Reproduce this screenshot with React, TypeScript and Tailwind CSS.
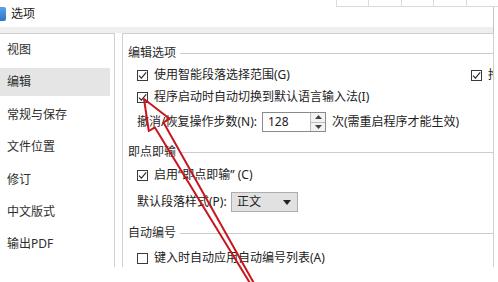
import React from 'react'

const NAV_ITEMS = ['视图', '编辑', '常规与保存', '文件位置', '修订', '中文版式', '输出PDF']

function Check({ on }: { on?: boolean }) {
  return (
    <span className="flex h-[11px] w-[11px] shrink-0 items-center justify-center border border-[#3a3a3a] bg-white">
      {on && (
        <svg width="9" height="9" viewBox="0 0 9 9">
          <path d="M1 4.6 L3.4 7.2 L8.2 1.4" fill="none" stroke="#262626" strokeWidth="1.1" />
        </svg>
      )}
    </span>
  )
}

function GroupHeader({ label }: { label: string }) {
  return (
    <div className="flex h-[20px] items-center gap-[4px] pl-[5px]">
      <span className="text-[12px] leading-none text-[#2a2a2a]">{label}</span>
      <div className="h-px flex-1 bg-[#cdcdcd]" />
    </div>
  )
}

function CheckRow({ on, label }: { on?: boolean; label: string }) {
  return (
    <div className="flex shrink-0 items-center gap-[6px]">
      <Check on={on} />
      <span className="whitespace-nowrap text-[12px] leading-none text-[#222]">{label}</span>
    </div>
  )
}

export default function App() {
  return (
    <div className="relative h-[282px] w-[498px] overflow-hidden bg-white font-['Noto_Sans','Noto_Sans_CJK_SC',sans-serif]">
      {/* Title bar */}
      <div className="flex h-[27px]">
        <div className="flex items-center pt-[1px]">
          <div className="h-[14px] w-[6px] rounded-r-[2px] bg-gradient-to-b from-[#5aa2ea] to-[#2f74c8]" />
          <span className="ml-[5px] text-[12px] leading-none text-[#1a1a1a]">选项</span>
        </div>
        <div className="ml-auto flex w-[162px] flex-col">
          <div className="flex h-[7px] border-b border-[#dadada]">
            {[0, 1, 2, 3, 4].map((i) => (
              <div key={i} className="h-full w-[33px] border-l border-[#dadada]" />
            ))}
          </div>
          <div className="mr-[4px] flex-1 border-r border-[#c4c4c4]" />
        </div>
      </div>

      {/* Band */}
      <div className="mr-[4px] h-[6px] border-r border-[#c4c4c4] bg-[#efefef]" />

      {/* Body */}
      <div className="flex h-[234px] pr-[4px]">
        {/* Left nav */}
        <div className="w-[115px] shrink-0 border-t border-r border-[#cfcfcf] pt-[2px]">
          <div className="flex flex-col gap-[4.4px]">
            {NAV_ITEMS.map((item) => (
              <div
                key={item}
                className={`mr-[4px] flex h-[28px] items-center pl-[7px] text-[12px] leading-none text-[#2e2e2e] ${item === '编辑' ? 'bg-[#e5e5e5]' : ''}`}
              >
                {item}
              </div>
            ))}
          </div>
        </div>

        {/* Right content */}
        <div className="ml-[7px] min-w-0 flex-1 overflow-hidden border-t border-r border-l border-[#cfcfcf]">
          <div className="mt-[9px]">
            <GroupHeader label="编辑选项" />
          </div>

          <div className="mt-[2px] flex h-[20px] items-center pl-[14px]">
            <div className="w-[334px] shrink-0">
              <CheckRow on label="使用智能段落选择范围(G)" />
            </div>
            <CheckRow on label="拖放式文字编辑(D)" />
          </div>

          <div className="mt-[2px] flex h-[20px] items-center pl-[14px]">
            <CheckRow on label="程序启动时自动切换到默认语言输入法(I)" />
          </div>

          <div className="mt-[5px] flex h-[20px] items-center pl-[14px] text-[12px] leading-none text-[#222]">
            <span className="w-[125px] shrink-0 whitespace-nowrap">撤消/恢复操作步数(N):</span>
            <div className="flex h-[20px] w-[64px] shrink-0 border border-[#8a8a8a] bg-white">
              <span className="flex flex-1 items-center pl-[5px]">128</span>
              <div className="flex w-[15px] flex-col border-l border-[#bdbdbd] bg-[#f3f3f3]">
                <div className="flex flex-1 items-center justify-center border-b border-[#bdbdbd]">
                  <svg width="7" height="4" viewBox="0 0 7 4">
                    <path d="M0 4 L3.5 0 L7 4 Z" fill="#444" />
                  </svg>
                </div>
                <div className="flex flex-1 items-center justify-center">
                  <svg width="7" height="4" viewBox="0 0 7 4">
                    <path d="M0 0 L3.5 4 L7 0 Z" fill="#444" />
                  </svg>
                </div>
              </div>
            </div>
            <span className="ml-[6px] whitespace-nowrap">次(需重启程序才能生效)</span>
          </div>

          <div className="mt-[10px]">
            <GroupHeader label="即点即输" />
          </div>

          <div className="mt-[3px] flex h-[20px] items-center pl-[14px]">
            <CheckRow on label="启用“即点即输” (C)" />
          </div>

          <div className="mt-[7px] flex h-[20px] items-center pl-[14px] text-[12px] leading-none text-[#222]">
            <span className="w-[94px] shrink-0 whitespace-nowrap">默认段落样式(P):</span>
            <div className="flex h-[20px] w-[67px] shrink-0 items-center justify-between border border-[#adadad] bg-[#e1e1e1] pr-[6px] pl-[5px]">
              <span>正文</span>
              <svg width="8" height="5" viewBox="0 0 8 5">
                <path d="M0 0 L4 5 L8 0 Z" fill="#222" />
              </svg>
            </div>
          </div>

          <div className="mt-[11px]">
            <GroupHeader label="自动编号" />
          </div>

          <div className="mt-[5px] flex h-[20px] items-center pl-[14px]">
            <CheckRow label="键入时自动应用自动编号列表(A)" />
          </div>
        </div>
      </div>

      {/* Red annotation arrow */}
      <svg className="pointer-events-none absolute inset-0" width="498" height="282" viewBox="0 0 498 282">
        <path
          d="M144 99 L148.8 131 L154.9 127.4 L254.7 290.8 L257.3 289.2 L163.5 122.4 L169.6 118.8 Z"
          fill="none"
          stroke="#c8161e"
          strokeWidth="2"
          strokeLinejoin="round"
        />
      </svg>
    </div>
  )
}
